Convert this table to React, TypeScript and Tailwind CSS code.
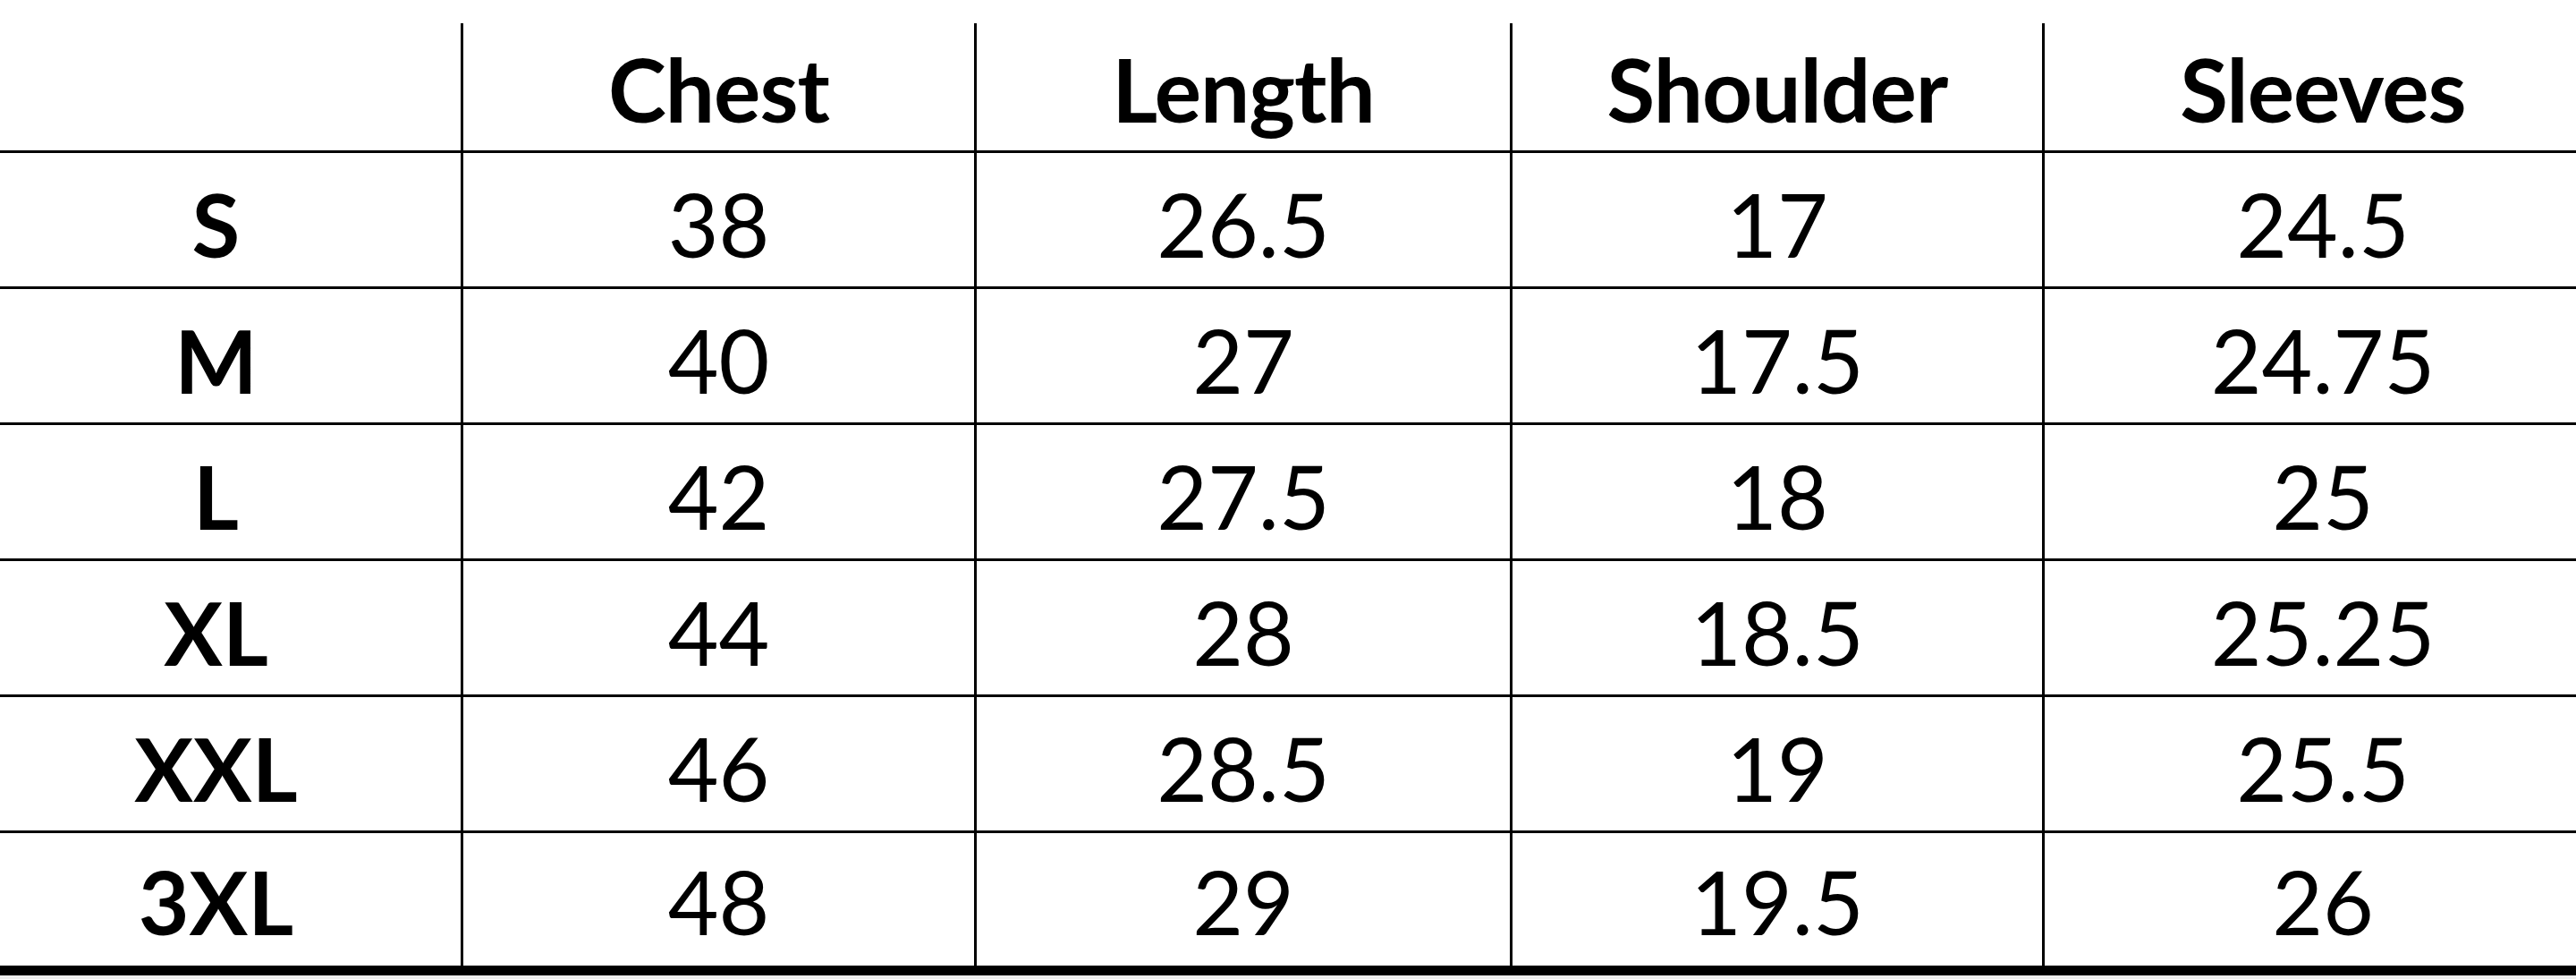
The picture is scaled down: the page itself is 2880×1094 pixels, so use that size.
const headers = ['Chest', 'Length', 'Shoulder', 'Sleeves'];

const rows = [
  { size: 'S', values: ['38', '26.5', '17', '24.5'] },
  { size: 'M', values: ['40', '27', '17.5', '24.75'] },
  { size: 'L', values: ['42', '27.5', '18', '25'] },
  { size: 'XL', values: ['44', '28', '18.5', '25.25'] },
  { size: 'XXL', values: ['46', '28.5', '19', '25.5'] },
  { size: '3XL', values: ['48', '29', '19.5', '26'] },
];

export default function App() {
  return (
    <div className="min-h-screen w-[2880px] overflow-hidden bg-white text-black [font-family:Lato,'Liberation_Sans',sans-serif]">
      <div className="pt-[26px]">
        <div className="grid grid-cols-[518px_574px_599px_595px_1fr] text-[98px] leading-none">
          {/* header row */}
          <div className="h-[145px] border-b-[3px] border-r-[3px] border-black" />
          {headers.map((h, i) => (
            <div
              key={h}
              className={`flex h-[145px] items-center justify-center border-b-[3px] border-black pt-[4px] font-bold tracking-[-1px] ${
                i < headers.length - 1 ? 'border-r-[3px]' : 'pl-[28px]'
              }`}
            >
              {h}
            </div>
          ))}

          {rows.map((row, r) => {
            const last = r === rows.length - 1;
            const rowCls = last
              ? 'h-[159px] border-b-[11px] pt-[4px]'
              : 'h-[152px] border-b-[3px] pt-[8px]';
            return [
              <div
                key={row.size}
                className={`flex items-center justify-center border-r-[3px] border-black pr-[32px] font-bold ${rowCls}`}
              >
                {row.size}
              </div>,
              ...row.values.map((v, i) => (
                <div
                  key={row.size + i}
                  className={`flex items-center justify-center border-black ${rowCls} ${
                    i < row.values.length - 1 ? 'border-r-[3px]' : 'pl-[28px]'
                  }`}
                >
                  {v}
                </div>
              )),
            ];
          })}
        </div>
        <div className="h-[4px] bg-[#eeeeee]" />
      </div>
    </div>
  );
}
